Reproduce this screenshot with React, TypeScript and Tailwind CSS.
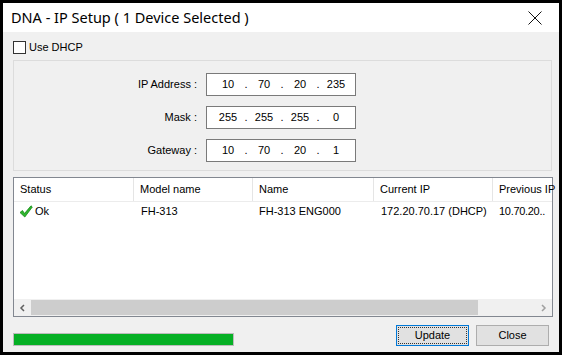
import { FC } from "react";

const ui = "font-['Liberation_Sans',Arial,sans-serif] text-[11px] text-black";

const IpBox: FC<{ parts: string[] }> = ({ parts }) => (
  <div className="flex h-[23px] w-[150px] items-center border border-[#7a7a7a] bg-white pl-[7px]">
    {parts.map((p, i) => (
      <div key={i} className="flex items-center">
        {i > 0 && <span className="w-[8px] text-center">.</span>}
        <span className="w-[28px] text-center">{p}</span>
      </div>
    ))}
  </div>
);

const CheckIcon = () => (
  <svg width="14" height="13" viewBox="0 0 14 13">
    <path
      d="M1 7.5 L3.5 5.5 L5.5 8.5 L12 0.8 L13.3 2 L5.8 12 Z"
      fill="#2fb52f"
      stroke="#138a13"
      strokeWidth="0.8"
      strokeLinejoin="round"
    />
  </svg>
);

const columns = [
  { title: "Status", w: "w-[120px]" },
  { title: "Model name", w: "w-[119px]" },
  { title: "Name", w: "w-[121px]" },
  { title: "Current IP", w: "w-[119px]" },
  { title: "Previous IP", w: "w-[80px]" },
];

const App: FC = () => {
  return (
    <div className={`h-[355px] w-[562px] overflow-hidden bg-black pl-[3px] pt-[3px] ${ui}`}>
      <div className="flex h-[349px] w-[556px] flex-col bg-[#f0f0f0]">
        {/* title bar */}
        <div className="flex h-[29px] items-center justify-between bg-white pl-[8px] pr-[17px]">
          <span className="font-['Noto_Sans',sans-serif] text-[14.5px] leading-none">
            DNA - IP Setup ( 1 Device Selected )
          </span>
          <svg width="14" height="14" viewBox="0 0 14 14">
            <path d="M0.5 0.5 L13.5 13.5 M13.5 0.5 L0.5 13.5" stroke="#111" strokeWidth="1" />
          </svg>
        </div>

        <div className="flex flex-1 flex-col px-[10px]">
          <label className="mt-[9px] flex h-[13px] items-center gap-[3px]">
            <span className="h-[13px] w-[13px] border border-[#333] bg-white" />
            <span>Use DHCP</span>
          </label>

          {/* address group */}
          <div className="mt-[6px] flex h-[111px] w-[539px] flex-col gap-[10px] border border-[#dcdcdc] pt-[12px]">
            {[
              ["IP Address :", ["10", "70", "20", "235"]],
              ["Mask :", ["255", "255", "255", "0"]],
              ["Gateway :", ["10", "70", "20", "1"]],
            ].map(([label, parts]) => (
              <div key={label as string} className="flex items-center">
                <span className="w-[183px] text-right">{label as string}</span>
                <div className="ml-[9px]">
                  <IpBox parts={parts as string[]} />
                </div>
              </div>
            ))}
          </div>

          {/* device list */}
          <div className="mt-[6px] flex h-[140px] w-[540px] flex-col border border-[#828790] bg-white">
            <div className="flex h-[24px] border-b border-[#ececec]">
              {columns.map((c, i) => (
                <div
                  key={c.title}
                  className={`${c.w} flex shrink-0 items-center overflow-hidden whitespace-nowrap pl-[6px] ${
                    i < columns.length - 1 ? "border-r border-[#e5e5e5]" : ""
                  }`}
                >
                  {c.title}
                </div>
              ))}
            </div>
            <div className="flex h-[19px] items-center">
              <div className="flex w-[120px] shrink-0 items-center gap-[2px] pl-[5px]">
                <CheckIcon />
                <span>Ok</span>
              </div>
              <div className="w-[119px] shrink-0 pl-[7px]">FH-313</div>
              <div className="w-[121px] shrink-0 pl-[6px]">FH-313 ENG000</div>
              <div className="w-[119px] shrink-0 pl-[7px]">172.20.70.17 (DHCP)</div>
              <div className="w-[58px] shrink-0 whitespace-nowrap pl-[6px] tracking-[-0.3px]">10.70.20..</div>
            </div>
            <div className="flex-1" />
            <div className="flex h-[17px] items-center bg-[#f0f0f0]">
              <div className="flex w-[17px] justify-center">
                <svg width="7" height="8" viewBox="0 0 7 8">
                  <path d="M5 1 L2 4 L5 7" stroke="#606060" strokeWidth="1.5" fill="none" />
                </svg>
              </div>
              <div className="h-[15px] w-[447px] bg-[#cdcdcd]" />
              <div className="flex-1" />
              <div className="flex w-[17px] justify-center">
                <svg width="7" height="8" viewBox="0 0 7 8">
                  <path d="M2 1 L5 4 L2 7" stroke="#a0a0a0" strokeWidth="1.5" fill="none" />
                </svg>
              </div>
            </div>
          </div>

          {/* footer */}
          <div className="mt-[8px] flex items-start">
            <div className="mt-[8px] h-[13px] w-[221px] border border-[#bcbcbc] bg-[#e6e6e6]">
              <div className="h-full w-full bg-[#06b025]" />
            </div>
            <div className="flex-1" />
            <button className="flex h-[21px] w-[73px] items-center justify-center border border-[#0078d7] bg-[#e1e1e1] p-[1px]">
              <span className="flex h-full w-full items-center justify-center border border-dotted border-[#333]">
                Update
              </span>
            </button>
            <button className="ml-[7px] flex h-[21px] w-[73px] items-center justify-center border border-[#adadad] bg-[#e1e1e1]">
              Close
            </button>
          </div>
        </div>
      </div>
    </div>
  );
};

export default App;
